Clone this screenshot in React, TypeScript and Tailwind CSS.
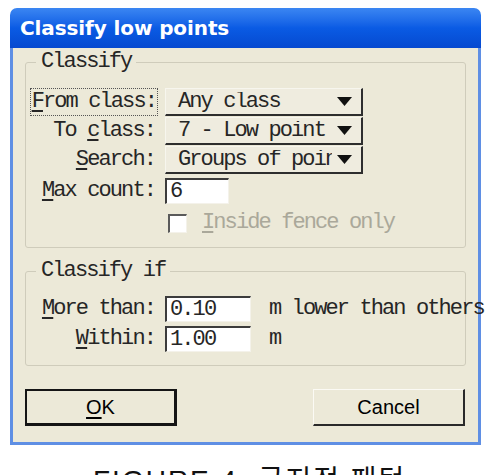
import React from "react";

const mono = "font-['Liberation_Mono','DejaVu_Sans_Mono',monospace] text-[22px] tracking-[-1.9px] leading-[20px] text-[#262626] whitespace-nowrap";

function Mn({ children }: { children: React.ReactNode }) {
  return <span className="underline underline-offset-[3px] decoration-[1.5px]">{children}</span>;
}

function Combo({ text }: { text: string }) {
  return (
    <div className="flex h-[28px] w-[198px] items-center border-t border-l border-t-[#f7f6ee] border-l-[#f7f6ee] border-r-2 border-b-2 border-r-[#2e2e2e] border-b-[#2e2e2e] bg-[#efecdf]">
      <div className={`${mono} min-w-0 flex-1 overflow-hidden pl-[12px]`}>{text}</div>
      <svg width="15" height="9" viewBox="0 0 15 9" className="mr-[9px] ml-[5px] shrink-0">
        <polygon points="0,0 15,0 7.5,9" fill="#111" />
      </svg>
    </div>
  );
}

function Field({ value, w }: { value: string; w: string }) {
  return (
    <div className={`flex h-[26px] ${w} items-center border-t-2 border-l-2 border-t-[#3c3c3c] border-l-[#3c3c3c] border-r border-b border-r-[#f4f2ea] border-b-[#f4f2ea] bg-white pl-[3px]`}>
      <span className={mono}>{value}</span>
    </div>
  );
}

export default function App() {
  return (
    <div className="h-[475px] overflow-hidden bg-white pt-2 pl-[10px]">
      <div className="w-[471px]">
        {/* title bar */}
        <div className="flex h-10 items-center rounded-t-[7px] bg-gradient-to-b from-[#3b86f2] via-[#0a5be4] to-[#0649d0] pl-[10px]">
          <span className="font-['DejaVu_Sans',sans-serif] text-[20px] font-bold tracking-[-0.1px] text-white">
            Classify low points
          </span>
        </div>

        {/* dialog body */}
        <div className="border-x-[3px] border-b-[3px] border-[#5f8fe4] bg-[#ece9d8] px-3 pt-1 pb-[16px]">
          <fieldset className="rounded-[3px] border border-[#cfccbb] pl-[2px] pr-3 pb-[14px]">
            <legend className={`${mono} ml-[8px] px-[5px]`}>Classify</legend>
            <div className="mt-[16px] flex flex-col">
              <div className="flex items-center gap-[7px]">
                <div className="flex w-[130px] justify-end">
                  <span className={`${mono} border border-dotted border-[#555] px-[1px] py-[3px]`}>
                    <Mn>F</Mn>rom class:
                  </span>
                </div>
                <Combo text="Any class" />
              </div>
              <div className="mt-[1px] flex items-center gap-[8px]">
                <div className={`${mono} w-[129px] pr-[2px] text-right`}>
                  To <Mn>c</Mn>lass:
                </div>
                <Combo text="7 - Low point" />
              </div>
              <div className="mt-[1px] flex items-center gap-[8px]">
                <div className={`${mono} w-[129px] pr-[2px] text-right`}>
                  <Mn>S</Mn>earch:
                </div>
                <Combo text="Groups of points" />
              </div>
              <div className="mt-[4px] flex items-center gap-[8px]">
                <div className={`${mono} w-[129px] pr-[2px] text-right`}>
                  <Mn>M</Mn>ax count:
                </div>
                <Field value="6" w="w-[64px]" />
              </div>
              <div className="mt-[9px] flex items-center pl-[140px]">
                <div className="h-[19px] w-[19px] border-t-2 border-l-2 border-t-[#5a5a5a] border-l-[#5a5a5a] border-r border-b border-r-[#f4f2ea] border-b-[#f4f2ea] bg-white" />
                <span className={`${mono} ml-[15px] text-[#aaa89a]`}>
                  <Mn>I</Mn>nside fence only
                </span>
              </div>
            </div>
          </fieldset>

          <fieldset className="mt-[13px] rounded-[3px] border border-[#cfccbb] pl-[2px] pr-3 pb-[13px]">
            <legend className={`${mono} ml-[8px] px-[5px]`}>Classify if</legend>
            <div className="mt-[15px] flex flex-col">
              <div className="flex items-center gap-[8px]">
                <div className={`${mono} w-[129px] pr-[2px] text-right`}>
                  <Mn>M</Mn>ore than:
                </div>
                <Field value="0.10" w="w-[86px]" />
                <span className={`${mono} -mr-8 ml-[10px]`}>m lower than others</span>
              </div>
              <div className="mt-[4px] flex items-center gap-[8px]">
                <div className={`${mono} w-[129px] pr-[2px] text-right`}>
                  <Mn>W</Mn>ithin:
                </div>
                <Field value="1.00" w="w-[86px]" />
                <span className={`${mono} ml-[10px]`}>m</span>
              </div>
            </div>
          </fieldset>

          {/* buttons */}
          <div className="mt-[23px] flex justify-between pr-[1px]">
            <button className="flex h-[37px] w-[152px] items-center justify-center border-t-2 border-l-2 border-r-[3px] border-b-[3px] border-[#151515] bg-[#ece9d8] font-['Liberation_Sans',sans-serif] text-[20px] text-black">
              <Mn>O</Mn>K
            </button>
            <button className="flex h-[37px] w-[152px] items-center justify-center border-t border-l border-t-[#fbfaf4] border-l-[#fbfaf4] border-r-2 border-b-2 border-r-[#2a2a2a] border-b-[#2a2a2a] bg-[#ece9d8] font-['Liberation_Sans',sans-serif] text-[20px] text-black">
              Cancel
            </button>
          </div>
        </div>

        <div className="mt-[22px] pl-[83px] font-['Liberation_Sans','Noto_Sans_CJK_KR',sans-serif] text-[28px] tracking-[2px] leading-none text-[#111]">
          FIGURE 4. 국지적 패턴
        </div>
      </div>
    </div>
  );
}
